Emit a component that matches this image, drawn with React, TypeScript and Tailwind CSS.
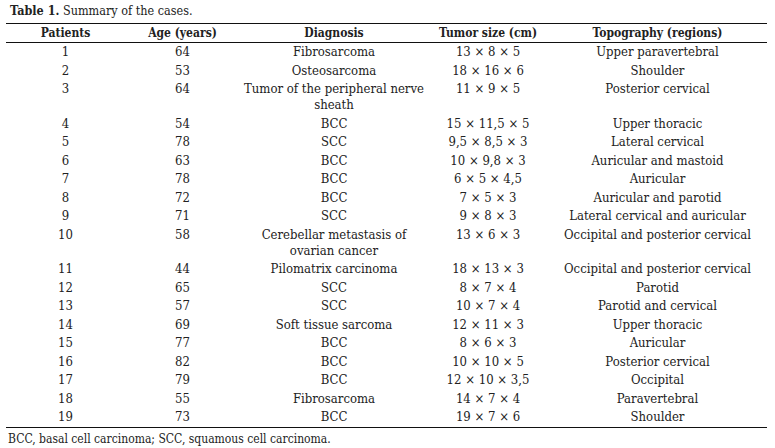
const rows: [string, string, string[], string, string][] = [
  ["1", "64", ["Fibrosarcoma"], "13 × 8 × 5", "Upper paravertebral"],
  ["2", "53", ["Osteosarcoma"], "18 × 16 × 6", "Shoulder"],
  ["3", "64", ["Tumor of the peripheral nerve", "sheath"], "11 × 9 × 5", "Posterior cervical"],
  ["4", "54", ["BCC"], "15 × 11,5 × 5", "Upper thoracic"],
  ["5", "78", ["SCC"], "9,5 × 8,5 × 3", "Lateral cervical"],
  ["6", "63", ["BCC"], "10 × 9,8 × 3", "Auricular and mastoid"],
  ["7", "78", ["BCC"], "6 × 5 × 4,5", "Auricular"],
  ["8", "72", ["BCC"], "7 × 5 × 3", "Auricular and parotid"],
  ["9", "71", ["SCC"], "9 × 8 × 3", "Lateral cervical and auricular"],
  ["10", "58", ["Cerebellar metastasis of", "ovarian cancer"], "13 × 6 × 3", "Occipital and posterior cervical"],
  ["11", "44", ["Pilomatrix carcinoma"], "18 × 13 × 3", "Occipital and posterior cervical"],
  ["12", "65", ["SCC"], "8 × 7 × 4", "Parotid"],
  ["13", "57", ["SCC"], "10 × 7 × 4", "Parotid and cervical"],
  ["14", "69", ["Soft tissue sarcoma"], "12 × 11 × 3", "Upper thoracic"],
  ["15", "77", ["BCC"], "8 × 6 × 3", "Auricular"],
  ["16", "82", ["BCC"], "10 × 10 × 5", "Posterior cervical"],
  ["17", "79", ["BCC"], "12 × 10 × 3,5", "Occipital"],
  ["18", "55", ["Fibrosarcoma"], "14 × 7 × 4", "Paravertebral"],
  ["19", "73", ["BCC"], "19 × 7 × 6", "Shoulder"],
];

const headers = ["Patients", "Age (years)", "Diagnosis", "Tumor size (cm)", "Topography (regions)"];

export default function App() {
  return (
    <div
      className="w-[775px] h-[448px] bg-white text-[#222] overflow-hidden"
      style={{ fontFamily: '"DejaVu Serif Condensed", "DejaVu Serif", serif', fontStretch: "condensed" }}
    >
      <div className="pl-[10px] pt-[3px] h-[23px] text-[12.5px] leading-[16px]">
        <span className="font-bold">Table 1.</span> Summary of the cases.
      </div>

      <table className="ml-[6px] w-[761px] table-fixed border-collapse text-[13px] leading-[16px]">
        <colgroup>
          <col className="w-[119px]" />
          <col className="w-[115px]" />
          <col className="w-[188px]" />
          <col className="w-[120px]" />
          <col className="w-[219px]" />
        </colgroup>
        <thead>
          <tr className="border-t-[1.5px] border-b-[1.5px] border-[#111]">
            {headers.map((h) => (
              <th key={h} className="h-[19px] py-0 text-[12px] font-bold text-center">
                {h}
              </th>
            ))}
          </tr>
        </thead>
        <tbody className="border-b-[1.5px] border-[#111]">
          {rows.map((r) => (
            <tr key={r[0]}>
              <td className="py-[1.25px] text-center align-top">{r[0]}</td>
              <td className="py-[1.25px] text-center align-top">{r[1]}</td>
              <td className="py-[1.25px] text-center align-top whitespace-nowrap">
                {r[2].map((line) => (
                  <div key={line}>{line}</div>
                ))}
              </td>
              <td className="py-[1.25px] text-center align-top">{r[3]}</td>
              <td className="py-[1.25px] text-center align-top">{r[4]}</td>
            </tr>
          ))}
        </tbody>
      </table>

      <div className="pl-[8px] pt-[4px] text-[12px] leading-[14px]">
        BCC, basal cell carcinoma; SCC, squamous cell carcinoma.
      </div>
    </div>
  );
}
